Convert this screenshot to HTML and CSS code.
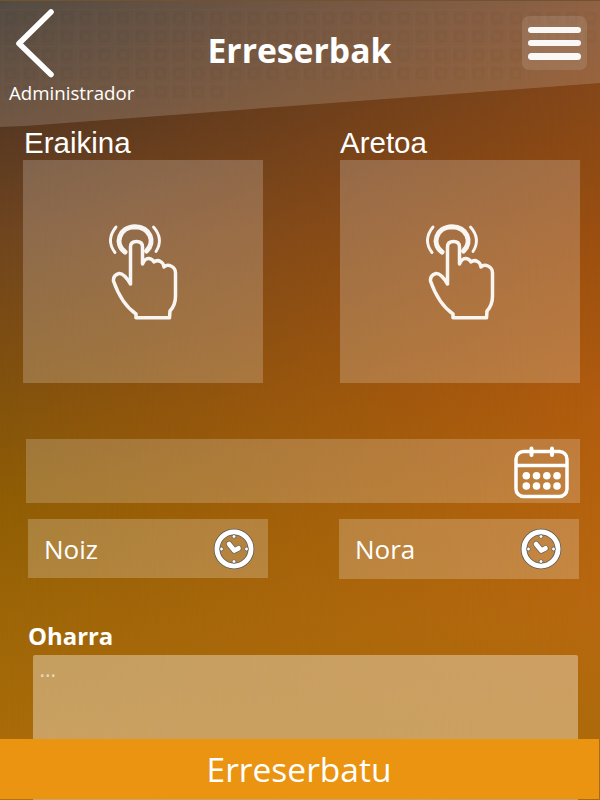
FILE: index.html
```
<!DOCTYPE html>
<html lang="eu">
<head>
<meta charset="utf-8">
<title>Erreserbak</title>
<link rel="stylesheet" href="styles.css">
</head>
<body>
<svg class="defs" aria-hidden="true">
  <symbol id="touch" viewBox="0 0 110 120">
    <g fill="none" stroke="#fff" stroke-linejoin="round" stroke-linecap="round" stroke-opacity=".93">
      <path stroke-width="5" d="M35 42C24 34 29 17 45 16.700C60 17 66 32 56.500 41"/>
      <path stroke-width="2.900" d="M26 17Q15.500 30 25 42.500M63.500 17Q74 29 66 41.500"/>
      <path stroke-width="3.500" d="M40.500 74V37Q40.500 31.500 46.500 31.500Q52.500 31.500 52.500 37V54Q55 48 59 48.500Q62.500 49 64 52Q67 49.500 70.500 51.500Q73.500 53 74 57Q77 54 81 56Q85.500 58 85.500 63V86Q85.500 95 80 101L79.500 107.800H46V104C36 97 28 84 23.500 71Q23 65 29 63.500Q34 63 40.500 74"/>
    </g>
  </symbol>
  <symbol id="clock" viewBox="0 0 42 42">
    <circle cx="21" cy="21" r="17" fill="none" stroke="#5b5b59" stroke-width="6.600"/>
    <circle cx="21" cy="21" r="17" fill="none" stroke="#fff" stroke-width="5"/>
    <g fill="#fff" stroke="#62605b" stroke-width=".8"><circle cx="21" cy="8.500" r="1.900"/><circle cx="21" cy="33.500" r="1.900"/><circle cx="8.500" cy="21" r="1.900"/><circle cx="33.500" cy="21" r="1.900"/></g>
    <path d="M16 16L21.300 22.500L25.500 20.300" fill="none" stroke="#62605b" stroke-width="6" stroke-linecap="round" stroke-linejoin="round"/>
    <path d="M16 16L21.300 22.500L25.500 20.300" fill="none" stroke="#fff" stroke-width="4.700" stroke-linecap="round" stroke-linejoin="round"/>
  </symbol>
</svg>
<div class="screen">
  <header class="header">
    <svg class="texture" width="600" height="127" aria-hidden="true">
      <defs><pattern id="tiles" x="2" y="8" width="18.700" height="18.500" patternUnits="userSpaceOnUse">
        <rect x="4.500" y="4.500" width="9" height="9" rx="1" fill="none" stroke="#21150e" stroke-opacity=".035" stroke-width="3"/>
        <path d="M0 0H18.700M0 0V18.500" stroke="#fff" stroke-opacity=".015" stroke-width="2"/>
      </pattern></defs>
      <path d="M0 8H600V45H530V82H230V101H0Z" fill="url(#tiles)"/>
    </svg>
    <div class="back">
      <svg width="40" height="70" viewBox="0 0 40 70"><path d="M37 4L5 35.500L37 66.500" fill="none" stroke="#fff" stroke-width="5.600" stroke-linecap="round" stroke-linejoin="round"/></svg>
      <span>Administrador</span>
    </div>
    <h1>Erreserbak</h1>
    <div class="menu"><i></i><i></i><i></i></div>
  </header>
  <main>
    <section class="pickers">
      <div class="picker"><h2>Eraikina</h2><div class="tile"><svg width="110" height="120"><use href="#touch"/></svg></div></div>
      <div class="picker"><h2>Aretoa</h2><div class="tile"><svg width="110" height="120"><use href="#touch"/></svg></div></div>
    </section>
    <div class="date">
      <svg width="56" height="54" viewBox="0 0 56 54" fill="none" stroke="#fff">
        <rect x="2" y="6.500" width="51" height="45" rx="7.500" stroke-width="3.500"/>
        <path d="M2 20.500H53" stroke-width="3.400"/>
        <path d="M17.500 3.500V10M38 3.500V10" stroke-width="4" stroke-linecap="round"/>
        <g fill="#fff" stroke="none"><circle cx="12.300" cy="30.700" r="3.800"/><circle cx="22.500" cy="30.700" r="3.800"/><circle cx="32.800" cy="30.700" r="3.800"/><circle cx="43" cy="30.700" r="3.800"/><circle cx="12.300" cy="41" r="3.800"/><circle cx="22.500" cy="41" r="3.800"/><circle cx="32.800" cy="41" r="3.800"/><circle cx="43" cy="41" r="3.800"/></g>
      </svg>
    </div>
    <div class="times">
      <div class="time from"><span>Noiz</span><svg width="42" height="42"><use href="#clock"/></svg></div>
      <div class="time to"><span>Nora</span><svg width="42" height="42"><use href="#clock"/></svg></div>
    </div>
    <h3>Oharra</h3>
    <div class="note">...</div>
  </main>
  <div class="submit"><span>Erreserbatu</span></div>
</div>
</body>
</html>
```
FILE: styles.css
```
* { box-sizing: border-box; }
body { margin: 0; color: #fff; font-family: "Open Sans", sans-serif; }
h1, h2, h3 { margin: 0; }
svg { display: block; flex: none; }
.defs { position: absolute; width: 0; height: 0; }
.screen {
  position: relative; isolation: isolate; width: 600px; height: 800px; overflow: hidden;
  background: linear-gradient(#33291f 0, #5a3a22 140px, #6f4520 230px, #80500f 370px, #8f5d05 500px, #9b6507 600px, #aa6c0a 740px, #b5730a 800px);
}
.screen::before {
  content: ""; position: absolute; inset: 0; z-index: -1;
  background: linear-gradient(#7b4420 0, #8c4914 140px, #9d500f 250px, #b05b0e 400px, #b5620e 500px, #b7680f 620px, #ae6a0a 720px, #ad6a08 800px);
  -webkit-mask-image: linear-gradient(to right, transparent, #000);
  mask-image: linear-gradient(to right, transparent, #000);
}
.header {
  position: relative; display: flex; justify-content: space-between; height: 127px;
  background: rgba(255, 255, 255, .16); border-top: 1px solid #72532f;
  clip-path: polygon(0 0, 100% 0, 100% 83px, 25px 126px, 0 127px);
}
.texture { position: absolute; inset: 0; z-index: -1; }
.back { width: 140px; padding: 7px 0 0 9px; font-size: 18.7px; line-height: 25px; }
.back svg { margin: 0 0 2px 5px; }
.back span { display: block; }
h1 { padding-top: 26px; font-size: 33.7px; line-height: 46px; font-weight: 700; }
.header h1 { width: 192px; white-space: nowrap; }
.menu {
  display: flex; flex-direction: column; align-items: center; gap: 7px;
  width: 65px; height: 54px; margin: 15px 13px 0 55px; padding: 10.6px 0 0;
  background: rgba(255, 255, 255, .11); border-radius: 7px;
}
.menu i { width: 53px; height: 6.4px; border-radius: 4px; background: #faf8f7; }
.pickers { display: flex; justify-content: space-between; padding: 0 20px 0 23px; }
.picker { width: 240px; }
h2 { height: 33px; font: 400 29.5px/31px "Liberation Sans", sans-serif; }
.picker:first-child h2 { padding-left: 1px; }
.tile { height: 223px; padding: 50px 0 0 67px; background: rgba(255, 255, 255, .205); }
.date {
  display: flex; justify-content: flex-end; height: 64px; margin: 56px 20px 0 26px;
  padding: 6px 10px 0 0; background: rgba(255, 255, 255, .195);
}
.times { display: flex; justify-content: space-between; padding: 16px 21px 0 28px; }
.time {
  display: flex; align-items: center; justify-content: space-between; width: 240px; height: 59px;
  padding: 0 13px 0 16px; background: rgba(255, 255, 255, .215); font-size: 26px;
}
.time.to { height: 60px; padding-right: 17px; padding-bottom: 1px; }
h3 { margin: 40px 0 0 28px; font-size: 23.9px; line-height: 34px; height: 36px; font-weight: 700; }
.note {
  height: 160px; margin: 0 22px 0 33px; padding: 0 6.5px; border-radius: 2px;
  background: rgba(240, 227, 205, .45); font-size: 21px; line-height: 29px; color: rgba(255, 255, 255, .6);
}
.submit {
  position: absolute; left: 0; right: 1px; bottom: 1px; height: 60px;
  background: #ea9411; display: flex; justify-content: center; font-size: 33.5px; line-height: 61px; padding-right: 1px;
}
```
